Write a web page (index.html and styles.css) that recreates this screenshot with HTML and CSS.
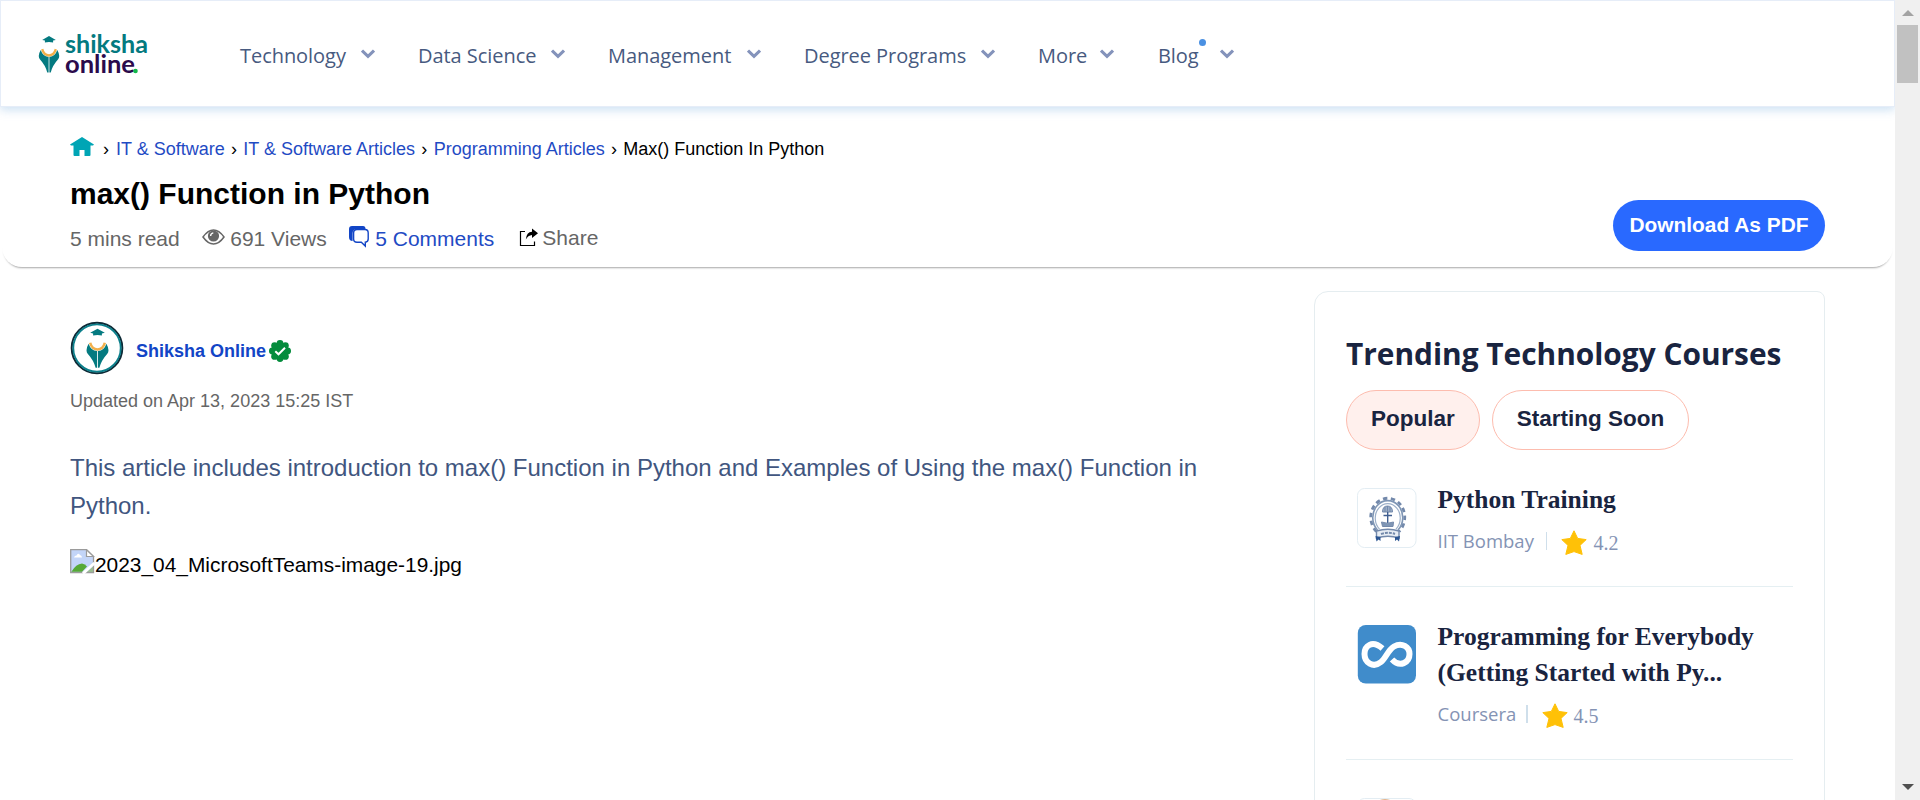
FILE: index.html
```html
<!DOCTYPE html>
<html lang="en">
<head>
<meta charset="utf-8">
<title>max() Function in Python - Shiksha Online</title>
<link rel="stylesheet" href="styles.css">
</head>
<body>
<svg class="defs" width="0" height="0">
  <defs>
    <symbol id="chev" viewBox="0 0 14 10"><path d="M1 1.5 L7 7.3 L13 1.5" fill="none" stroke="#8493bb" stroke-width="3.1"/></symbol>
    <symbol id="star" viewBox="0 0 26 26"><path d="M13 .8 L16.7 8.4 L25.2 9.6 L19 15.4 L21.2 24.4 L13 21.6 L4.8 24.4 L7 15.4 L.8 9.6 L9.3 8.4 Z" fill="#ffc107" stroke="#ffc107" stroke-width="1" stroke-linejoin="round"/></symbol>
    <symbol id="nib" viewBox="0 0 22 38">
      <path d="M11 0 L18 4 L15.2 4.6 V6.6 Q11 5.6 6.800 6.600 V4.600 L4 4 Z" fill="#047a80"/>
      <path d="M4 13.500 Q5.500 19.500 11 20 Q16.500 19.500 18 13.500" fill="none" stroke="#f2b04b" stroke-width="2.400"/>
      <path d="M2.500 14.500 Q4.500 21 10.600 21.500 V37.500 H9.200 Q7.500 30.500 1.600 24 Q-1 20.500 2.500 14.500 Z M19.500 14.500 Q17.500 21 11.400 21.500 V37.500 H12.800 Q14.500 30.500 20.400 24 Q23 20.500 19.500 14.500 Z" fill="#047a80"/>
    </symbol>
  </defs>
</svg>
<div class="window">
  <div class="page">
    <header class="topbar">
      <svg class="logo" width="112" height="52" viewBox="0 -6 112 52">
        <use href="#nib" x="0" y="3" width="22" height="37"/>
        <text x="27" y="20" class="logo-a" textLength="83" lengthAdjust="spacingAndGlyphs">shiksha</text>
        <text x="27" y="39.500" class="logo-b" textLength="70" lengthAdjust="spacingAndGlyphs">online</text>
        <circle cx="97.500" cy="38" r="2.300" fill="#12b84a"/>
      </svg>
      <nav class="nav">
        <a class="n1">Technology</a><svg class="chev"><use href="#chev"/></svg>
        <a class="n2">Data Science</a><svg class="chev"><use href="#chev"/></svg>
        <a class="n3">Management</a><svg class="chev"><use href="#chev"/></svg>
        <a class="n4">Degree Programs</a><svg class="chev"><use href="#chev"/></svg>
        <a class="n5">More</a><svg class="chev"><use href="#chev"/></svg>
        <a class="n6">Blog<i class="dot"></i></a><svg class="chev"><use href="#chev"/></svg>
      </nav>
    </header>

    <section class="hero">
      <div class="crumbs">
        <svg width="24" height="19" viewBox="0 0 24 19"><path d="M12 0 L24 7.500 L23 8.600 H20.500 V18 Q20.500 19 19.500 19 H14.500 V13 H9.500 V19 H4.500 Q3.500 19 3.500 18 V8.600 H1 L0 7.500 Z" fill="#00a5b5"/></svg>
        <span class="sep first">›</span><a>IT &amp; Software</a><span class="sep">›</span><a>IT &amp; Software Articles</a><span class="sep">›</span><a>Programming Articles</a><span class="sep">›</span><span>Max() Function In Python</span>
      </div>
      <div class="hero-row">
        <div>
          <h1>max() Function in Python</h1>
          <div class="meta">
            <span>5 mins read</span>
            <svg class="eye" width="23" height="16" viewBox="0 0 23 16"><path d="M1 8 Q6 1 11.500 1 T22 8 Q17 15 11.500 15 T1 8 Z" fill="none" stroke="#666" stroke-width="1.500"/><circle cx="11.500" cy="7" r="5.600" fill="#666"/><path d="M8.600 7 Q8.700 4.200 11.300 3.800" fill="none" stroke="#fff" stroke-width="1.300"/></svg>
            <span>691 Views</span>
            <svg class="talk" width="20" height="22" viewBox="0 0 20 22"><path d="M3 0 H14 Q16.500 0 16.500 3 H8 Q3.600 3 3.600 7.500 V15 Q0 15 0 11 V3 Q0 0 3 0 Z" fill="#1245c6"/><path d="M8 3.500 H16 Q19.200 3.500 19.200 7 V13 Q19.200 16 16.300 16.200 V20 L12.300 16.200 H8 Q4.600 16.200 4.600 13 V7 Q4.600 3.500 8 3.500 Z" fill="#fff" stroke="#1245c6" stroke-width="1.400"/></svg>
            <span class="blue">5 Comments</span>
            <svg class="shareicon" width="20" height="19" viewBox="0 0 20 19"><path d="M6 3.500 H1.500 V17.500 H15.500 V13.500" fill="none" stroke="#000" stroke-width="1.200"/><path d="M13 .5 L19 5.300 L13 10 V7 Q9 7.300 6.800 11.500 Q7.500 4 13 3.700 Z" fill="#000"/></svg>
            <span class="share">Share</span>
          </div>
        </div>
        <button class="pdf">Download As PDF</button>
      </div>
    </section>

    <div class="columns">
      <main>
        <div class="author">
          <svg width="54" height="54" viewBox="0 0 54 54"><circle cx="27" cy="27" r="25.300" fill="#fff" stroke="#0e2a36" stroke-width="2"/><circle cx="27" cy="27" r="23.700" fill="none" stroke="#0b7f8b" stroke-width="1.800"/><use href="#nib" x="16" y="7" width="23" height="41"/></svg>
          <b>Shiksha Online</b>
          <svg class="badge" width="22" height="22" viewBox="0 0 22 22"><g fill="#048c3c"><circle cx="11" cy="11" r="8.800"/><circle cx="11" cy="3.400" r="3.400"/><circle cx="16.400" cy="5.600" r="3.400"/><circle cx="18.600" cy="11" r="3.400"/><circle cx="16.400" cy="16.400" r="3.400"/><circle cx="11" cy="18.600" r="3.400"/><circle cx="5.600" cy="16.400" r="3.400"/><circle cx="3.400" cy="11" r="3.400"/><circle cx="5.600" cy="5.600" r="3.400"/></g><path d="M6.300 11.300 L9.500 14.300 L16 7.800" fill="none" stroke="#fff" stroke-width="2"/></svg>
        </div>
        <div class="updated">Updated on Apr 13, 2023 15:25 IST</div>
        <p class="intro">This article includes introduction to max() Function in Python and Examples of Using the max() Function in<br>Python.</p>
        <div class="figure">
          <svg width="25" height="25" viewBox="0 0 25 25"><path d="M.7 .7 H16.500 L23.500 7.500 V23.500 H.7 Z" fill="#c3d5f8" stroke="#9b9b9b" stroke-width="1.300"/><path d="M1.400 22.800 Q6 15 12 14.500 Q15 15 17 17.500 L12 22.800 Z" fill="#56a936"/><path d="M4 8.500 Q4.500 6.500 6.500 6.500 Q8 3.500 10 6 Q12 6.500 12 8.500 Z" fill="#fff"/><path d="M16.500 .7 V7.500 H23.500 Z" fill="#fff" stroke="#9b9b9b" stroke-width="1.200"/><path d="M13 24.500 L24.500 14" stroke="#fff" stroke-width="3"/><path d="M17 23 L23 17.500 V23 Z" fill="#9bbc92"/></svg><span>2023_04_MicrosoftTeams-image-19.jpg</span>
        </div>
      </main>

      <aside>
        <h2>Trending Technology Courses</h2>
        <div class="tabs"><button class="tab on">Popular</button><button class="tab soon">Starting Soon</button></div>
        <article class="course">
          <svg class="clogo" width="60" height="60" viewBox="0 0 60 60"><rect x=".5" y=".5" width="58.500" height="59" rx="7" fill="#fff" stroke="#e3edf3"/>
            <g fill="none" stroke="#7389ab">
              <path d="M19.500 43.500 A17 19 0 1 1 42 43.500" stroke-width="2.800" stroke-dasharray="4.400 3.400"/>
              <path d="M20.500 42 A15 17 0 1 1 41 42" stroke="#7f96b5" stroke-width="1.600"/>
              <path d="M22.500 41 A12.500 14.500 0 1 1 39 41" stroke="#9db0c9" stroke-width="1.200"/>
              <path d="M25.500 24 Q25.500 18 30.500 18 Q35.500 18 35.500 24 Z M28 19 V24 M30.500 18 V24 M33 19 V24" fill="#9caec7" stroke-width="1"/>
              <path d="M26.500 27.500 H35 M30.700 24 V35" stroke="#405f91" stroke-width="1.400"/>
              <path d="M25.500 38.500 L24.500 34 Q30.500 36.500 36.500 34 L36 38.500 Z" fill="#7f96b5"/>
              <path d="M19.500 43 Q31 39.500 42 43 V50 Q31 46.500 19.500 50 Z" fill="#e7edf4" stroke-width="1.400"/>
              <path d="M24 46 Q31 43.500 38 46" stroke-width="2" stroke-dasharray="3 1"/>
            </g>
            <path d="M18.500 48 L23.500 49 V53 L21.500 51.500 L19.500 53.500 Z M43 48 L38 49 V53 L40 51.500 L42 53.500 Z" fill="#2b5592"/></svg>
          <div class="info">
            <h3>Python Training</h3>
            <div class="facts"><span class="p1">IIT Bombay</span><i class="bar"></i><svg class="star"><use href="#star"/></svg><em>4.2</em></div>
          </div>
        </article>
        <article class="course second">
          <svg class="clogo" width="60" height="60" viewBox="0 0 60 60"><rect x=".8" y="0" width="58.200" height="58.500" rx="8" fill="#408ccb"/><path d="M25.500 23.500 C15 14.500 7.500 21 7.500 29 C7.500 37.500 16 43.500 24 37 C29 33 31 25 37 21.500 C45 17 52.500 22 52.500 29 C52.500 37.500 43 43 35 34.500" fill="none" stroke="#fff" stroke-width="6"/></svg>
          <div class="info">
            <h3>Programming for Everybody<br>(Getting Started with Py...</h3>
            <div class="facts"><span class="p2">Coursera</span><i class="bar"></i><svg class="star"><use href="#star"/></svg><em>4.5</em></div>
          </div>
        </article>
        <article class="course third">
          <svg class="clogo" width="60" height="60" viewBox="0 0 60 60"><rect x=".5" y=".5" width="58.500" height="59" rx="7" fill="#fff" stroke="#e3edf3"/><path d="M20 3 Q28 -.5 36 3 Z" fill="#d99b67"/></svg>
        </article>
      </aside>
    </div>
  </div>
  <div class="scroll">
    <svg width="12" height="6" viewBox="0 0 12 6"><path d="M6 0 L12 6 H0 Z" fill="#a3a3a3"/></svg>
    <div class="thumb"></div>
    <svg class="down" width="12" height="6" viewBox="0 0 12 6"><path d="M6 6 L12 0 H0 Z" fill="#505050"/></svg>
  </div>
</div>
</body>
</html>
```

FILE: styles.css
```css
* { box-sizing: border-box; }
body { margin: 0; background: #fff; font-family: "Liberation Sans", Arial, sans-serif; color: #000; }
.defs { position: absolute; }
svg { flex: none; display: block; }
h1, h2, h3, p { margin: 0; }
button { font-family: inherit; padding: 0; }
.window { display: flex; width: 1920px; height: 800px; overflow: hidden; }
.page { width: 1895px; height: 800px; overflow: hidden; }

.topbar { height: 107px; border: 1px solid #e6edf8; box-shadow: 0 3px 9px rgba(130, 180, 225, .4); display: flex; align-items: flex-start; padding: 26px 0 0 37px; }
.logo-a, .logo-b { font: 700 24px Lato, sans-serif; }
.logo-a { fill: #047a80; }
.logo-b { fill: #2b0a4c; }
.nav { display: grid; grid-template-columns: 121px 57px 133px 57px 139px 57px 177px 57px 62px 57px 63px 14px; margin: 16px 0 0 90px; align-items: center; font: 20px/26px "Open Sans", sans-serif; color: #475a80; }
.nav a { white-space: nowrap; position: relative; letter-spacing: -.05px; }
.nav .n6 { left: 1px; }
.chev { width: 14px; height: 10px; margin: -4px 0 0; }
.dot { position: absolute; left: 41px; top: -4px; width: 7px; height: 7px; border-radius: 50%; background: #4a90e2; }

.hero { height: 160px; margin: 0 2px; padding: 30px 68px 0; border-radius: 0 0 20px 20px; box-shadow: 0 3px 2px -2px rgba(0, 0, 0, .35); clip-path: inset(10px 0 -6px 0); }
.crumbs { display: flex; font-size: 18px; line-height: 24px; white-space: nowrap; }
.crumbs svg { margin-top: 0; }
.crumbs a, .blue { color: #1f4bc4; }
.sep { width: 18.600px; text-align: center; }
.sep.first { width: 22px; padding-left: 2px; }
.hero-row { display: flex; justify-content: space-between; align-items: flex-end; margin-top: 15px; }
h1 { font-size: 30px; line-height: 36px; }
.meta { display: flex; align-items: center; height: 24px; margin-top: 14.500px; font-size: 21px; line-height: 24px; color: #666; white-space: nowrap; }
.eye { margin: -3px 5px 0 22.500px; }
.talk { margin: -3px 6px 0 22.500px; }
.shareicon { margin: -3px 3px 0 25px; }
.share { margin-top: -2px; }
.pdf { width: 212px; height: 51px; border: 0; border-radius: 26px; background: #2969ff; color: #fff; font-size: 20.900px; font-weight: 700; padding-bottom: 1px; }

.columns { display: flex; justify-content: space-between; padding: 0 70px; }
main { padding-top: 54px; white-space: nowrap; }
.author { display: flex; align-items: center; color: #1245c6; font-size: 18px; }
.author b { margin: 7px 3px 0 12px; }
.badge { margin-top: 6px; }
.updated { margin-top: 14px; font-size: 18px; line-height: 24px; color: #666; }
.intro { margin-top: 36px; font-size: 24px; line-height: 37.500px; color: #41567f; }
.figure { display: flex; margin-top: 25px; font-size: 20.900px; line-height: 31px; }

aside { width: 511px; height: 560px; flex: none; margin-left: -40px; margin-top: 24px; border: 1px solid #e5edf0; border-radius: 14px 8px 0 0; padding: 42px 31px 0; }
h2 { font: 700 29.850px/40px "Open Sans", sans-serif; color: #192440; white-space: nowrap; }
.tabs { display: flex; gap: 12px; margin-top: 16px; }
.tab { width: 134px; height: 60px; border: 1px solid #fdbcae; border-radius: 30px; background: #fff; color: #192440; font-size: 22.500px; font-weight: 700; padding-bottom: 2px; }
.on { background: #fff0ed; }
.soon { width: 197px; }
.course { display: flex; height: 137px; padding: 38px 0 0 11px; border-bottom: 1px solid #e5eff2; }
.second { height: 173px; }
.third { border: 0; }
.info { margin: -6px 0 0 20.500px; }
h3 { font: 700 25.500px/36px "Liberation Serif", serif; color: #192440; white-space: nowrap; }
.facts { display: flex; align-items: center; height: 26px; margin-top: 12px; font: 18.500px/26px "Open Sans", sans-serif; color: #8493b4; white-space: nowrap; }
.facts span { margin-top: -4px; }
.p1 { width: 108px; }
.p2 { width: 88px; }
.bar { width: 1px; height: 18px; margin-top: -5px; background: #cfdfeb; }
.second .bar { width: 2px; }
.star { width: 26px; height: 26px; margin: -1px 7px 0 14px; }
.second .star { margin: -1px 6px 0 14px; }
.facts em { font: 20px/26px "Liberation Serif", serif; margin-top: -1px; }

.scroll { width: 25px; height: 800px; background: #f0f0f0; display: flex; flex-direction: column; align-items: center; padding: 10px 0; }
.thumb { width: 21px; height: 58px; margin-top: 9px; background: #c1c1c1; }
.down { margin-top: auto; }
```
